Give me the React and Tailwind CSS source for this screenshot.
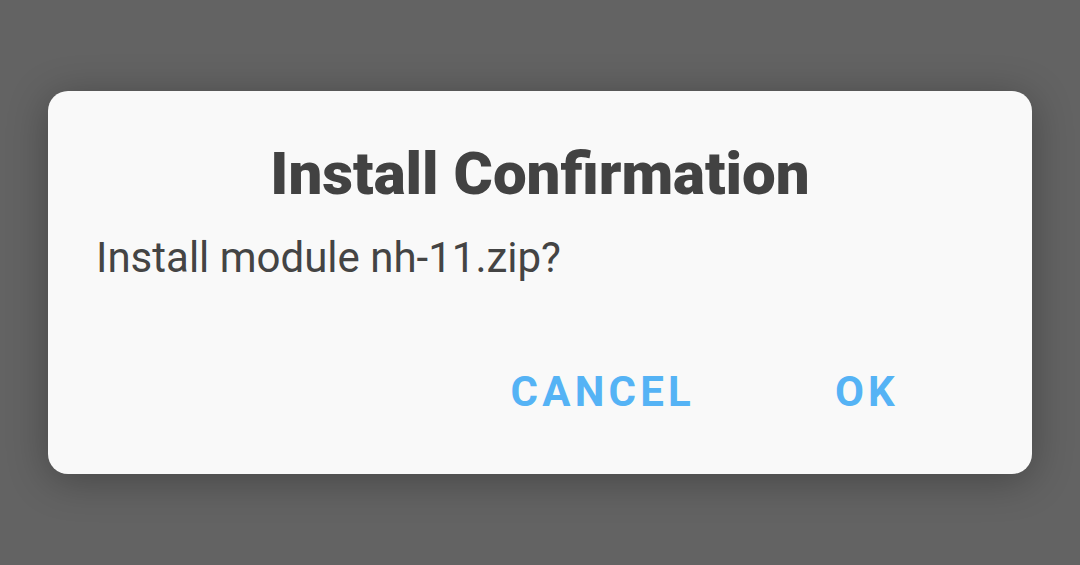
export default function App() {
  return (
    <div className="flex h-[565px] w-[1080px] items-start justify-center bg-[#636363] pt-[91px] font-['Roboto',sans-serif]">
      {/* dialog */}
      <div className="flex h-[383px] w-[984px] flex-col rounded-[20px] bg-[#f9f9f9] px-[48px] pt-[47px] shadow-[0_6px_40px_rgba(0,0,0,0.3)]">
        <h1 className="text-center text-[60px] font-black leading-[72px] text-[#424242]">Install Confirmation</h1>
        <p className="mt-[23px] text-[42px] leading-[50px] text-[#444444]">Install module nh-11.zip?</p>
        <div className="mt-[84px] flex justify-end gap-[140px] pr-[85px]">
          <button className="text-[42px] font-bold uppercase leading-[50px] tracking-[0.1em] text-[#55b3f5]">Cancel</button>
          <button className="text-[42px] font-bold uppercase leading-[50px] tracking-[0.1em] text-[#55b3f5]">OK</button>
        </div>
      </div>
    </div>
  );
}
